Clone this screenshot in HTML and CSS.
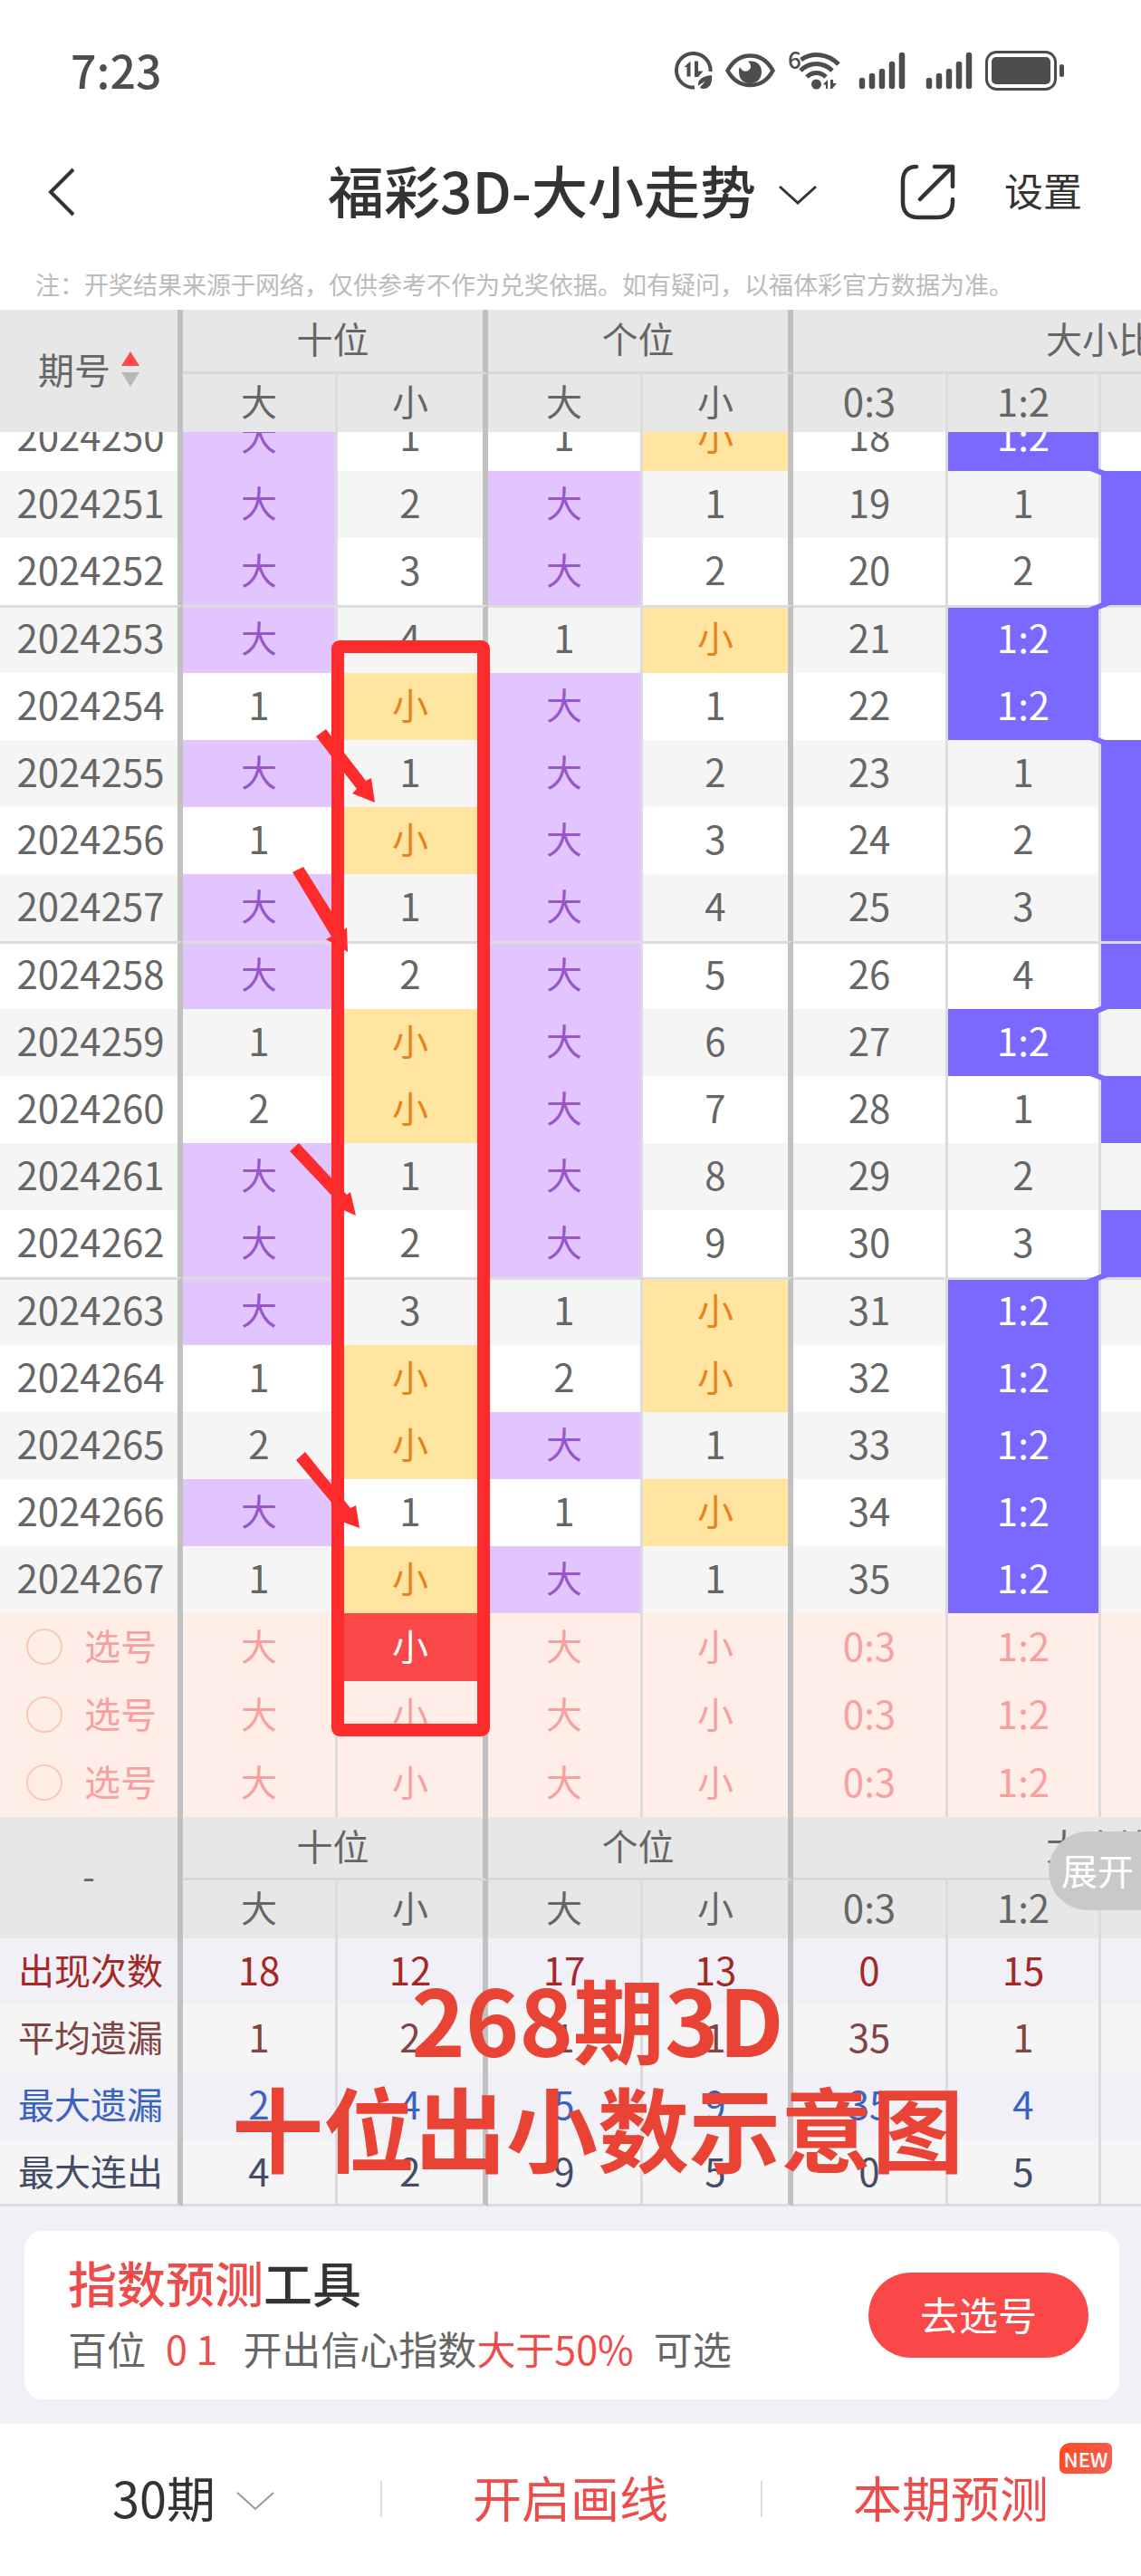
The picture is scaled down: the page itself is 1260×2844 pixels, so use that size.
FILE: index.html
```html
<!DOCTYPE html>
<html lang="zh-CN">
<head>
<meta charset="utf-8">
<meta name="viewport" content="width=device-width">
<title>福彩3D-大小走势</title>
<link rel="stylesheet" href="styles.css">
</head>
<body>
<header class="status">
  <span class="clock">7:23</span>
  <div class="status-icons">
    <svg width="42" height="42" viewBox="0 0 42 42"><path d="M22 39.500A18.800 18.800 0 1 1 39.500 22" fill="none" stroke="#4d4d4d" stroke-width="4"/><path d="M10.500 17l7-6.500v17h-4V17zM22 10.500h4v11h5.500L26 28h-4z" fill="#4d4d4d"/><path d="M41 26c1 8-2 15-9 15-2 0-3-.5-4-1.500l6-7-8 5c-1-6 5-11 15-11.500z" fill="#4d4d4d"/></svg>
    <svg width="55" height="42" viewBox="0 0 55 42"><path d="M2.500 21C9 9 18 4.500 27.500 4.500S46 9 52.500 21C46 33 37 37 27.500 37S9 33 2.500 21z" fill="none" stroke="#4d4d4d" stroke-width="4.500"/><path d="M25 11c8-2 15 3 15 11 0 7-4 13-12.500 13S15 30 15 22c0-2 0-3 1-5 2 4 6 6 9 4 4-2 4-7 0-10z" fill="#4d4d4d"/></svg>
    <svg width="58" height="44" viewBox="0 0 58 44"><text x="0" y="20" class="wifi-gen">6</text><g fill="none" stroke="#4d4d4d" stroke-width="5"><path d="M14.500 10C27 1.500 44 3 56 15"/><path d="M14 22c10-10 25-10 35 0"/><path d="M21 29c6-6 15-6 21 0"/></g><circle cx="31.500" cy="37" r="5.500" fill="#4d4d4d"/><path d="M39 37l5-5v10h-2v-4zM47 32h3v4h4l-5 6h-2z" fill="#4d4d4d"/></svg>
    <svg class="sim-one" width="52" height="42" viewBox="0 0 52 42"><path d="M4 32v6M15 27v11M26 22v16M37 14v24M48 4v34" stroke="#4d4d4d" stroke-width="6.500" stroke-linecap="round"/></svg>
    <svg width="52" height="42" viewBox="0 0 52 42"><path d="M4 32v6M15 27v11M26 22v16M37 14v24M48 4v34" stroke="#4d4d4d" stroke-width="6.500" stroke-linecap="round"/></svg>
    <svg width="88" height="44" viewBox="0 0 88 44"><rect x="1.500" y="1.500" width="76" height="41" rx="11" fill="none" stroke="#4d4d4d" stroke-width="3"/><rect x="7" y="7" width="65" height="30" rx="5" fill="#4d4d4d"/><rect x="82" y="15" width="5" height="14" rx="2.500" fill="#4d4d4d"/></svg>
  </div>
</header>

<nav class="nav">
  <button class="icon-btn back" aria-label="返回"><svg width="32" height="56" viewBox="0 0 32 56"><path d="M29 3L4 28l25 25" fill="none" stroke="#333" stroke-width="4"/></svg></button>
  <h1><button class="title">福彩3D-大小走势<svg width="44" height="24" viewBox="0 0 44 24"><path d="M2 3l20 18L42 3" fill="none" stroke="#333" stroke-width="3"/></svg></button></h1>
  <div class="nav-actions">
    <button class="icon-btn" aria-label="分享"><svg width="62" height="62" viewBox="0 0 62 62"><path d="M18 3C8 3 3 9 3 19v23c0 11 6 17 17 17h21c11 0 17-6 17-17v-3M38 3h20v22M57 4L22 39" fill="none" stroke="#333" stroke-width="4.500" stroke-linecap="round" stroke-linejoin="round"/></svg></button>
    <button class="settings">设置</button>
  </div>
</nav>
<p class="note">注：开奖结果来源于网络，仅供参考不作为兑奖依据。如有疑问，以福体彩官方数据为准。</p>

<main class="trend">
  <div class="scroll">
    <table>
      <colgroup><col class="w-issue"><col class="w-big"><col class="w-small"><col class="w-big"><col class="w-small"><col class="w-big"><col class="w-ratio"><col class="w-ratio"><col class="w-ratio"></colgroup>
      <thead>
        <tr class="head-group"><th rowspan="2" class="edge"><button class="sort">期号<svg width="20" height="42" viewBox="0 0 20 42"><path d="M10 2l10 16H0z" fill="#fa4a4a"/><path d="M10 41L0 25h20z" fill="#b8b8b8"/></svg></button></th><th colspan="2" class="edge">十位</th><th colspan="2" class="edge">个位</th><th colspan="4">大小比</th></tr>
        <tr class="head-sub"><th>大</th><th class="edge">小</th><th>大</th><th class="edge">小</th><th>0:3</th><th>1:2</th><th></th></tr>
      </thead>
      <tbody class="draws">
        <tr class="cut"><th><div>2024250</div></th><td class="b"><div>大</div></td><td><div>1</div></td><td><div>1</div></td><td class="s"><div>小</div></td><td><div>18</div></td><td class="r"><div>1:2</div></td><td></td></tr>
        <tr><th>2024251</th><td class="b">大</td><td>2</td><td class="b">大</td><td>1</td><td>19</td><td>1</td><td class="r"></td></tr>
        <tr><th>2024252</th><td class="b">大</td><td>3</td><td class="b">大</td><td>2</td><td>20</td><td>2</td><td class="r"></td></tr>
        <tr class="rule"><th>2024253</th><td class="b">大</td><td>4</td><td>1</td><td class="s">小</td><td>21</td><td class="r">1:2</td><td></td></tr>
        <tr><th>2024254</th><td>1</td><td class="s">小</td><td class="b">大</td><td>1</td><td>22</td><td class="r">1:2</td><td></td></tr>
        <tr><th>2024255</th><td class="b">大</td><td>1</td><td class="b">大</td><td>2</td><td>23</td><td>1</td><td class="r"></td></tr>
        <tr><th>2024256</th><td>1</td><td class="s">小</td><td class="b">大</td><td>3</td><td>24</td><td>2</td><td class="r"></td></tr>
        <tr><th>2024257</th><td class="b">大</td><td>1</td><td class="b">大</td><td>4</td><td>25</td><td>3</td><td class="r"></td></tr>
        <tr class="rule"><th>2024258</th><td class="b">大</td><td>2</td><td class="b">大</td><td>5</td><td>26</td><td>4</td><td class="r"></td></tr>
        <tr><th>2024259</th><td>1</td><td class="s">小</td><td class="b">大</td><td>6</td><td>27</td><td class="r">1:2</td><td></td></tr>
        <tr><th>2024260</th><td>2</td><td class="s">小</td><td class="b">大</td><td>7</td><td>28</td><td>1</td><td class="r"></td></tr>
        <tr><th>2024261</th><td class="b">大</td><td>1</td><td class="b">大</td><td>8</td><td>29</td><td>2</td><td></td></tr>
        <tr><th>2024262</th><td class="b">大</td><td>2</td><td class="b">大</td><td>9</td><td>30</td><td>3</td><td class="r"></td></tr>
        <tr class="rule"><th>2024263</th><td class="b">大</td><td>3</td><td>1</td><td class="s">小</td><td>31</td><td class="r">1:2</td><td></td></tr>
        <tr><th>2024264</th><td>1</td><td class="s">小</td><td>2</td><td class="s">小</td><td>32</td><td class="r">1:2</td><td></td></tr>
        <tr><th>2024265</th><td>2</td><td class="s">小</td><td class="b">大</td><td>1</td><td>33</td><td class="r">1:2</td><td></td></tr>
        <tr><th>2024266</th><td class="b">大</td><td>1</td><td>1</td><td class="s">小</td><td>34</td><td class="r">1:2</td><td></td></tr>
        <tr><th>2024267</th><td>1</td><td class="s">小</td><td class="b">大</td><td>1</td><td>35</td><td class="r">1:2</td><td></td></tr>
      </tbody>
      <tbody class="picks">
        <tr><th><label><input type="radio" name="pick">选号</label></th><td>大</td><td class="on">小</td><td>大</td><td>小</td><td>0:3</td><td>1:2</td><td></td></tr>
        <tr><th><label><input type="radio" name="pick">选号</label></th><td>大</td><td>小</td><td>大</td><td>小</td><td>0:3</td><td>1:2</td><td></td></tr>
        <tr><th><label><input type="radio" name="pick">选号</label></th><td>大</td><td>小</td><td>大</td><td>小</td><td>0:3</td><td>1:2</td><td></td></tr>
      </tbody>
      <tbody class="foot-head">
        <tr class="head-group"><th rowspan="2" class="edge">-</th><th colspan="2" class="edge">十位</th><th colspan="2" class="edge">个位</th><th colspan="4">大小比</th></tr>
        <tr class="head-sub"><th>大</th><th class="edge">小</th><th>大</th><th class="edge">小</th><th>0:3</th><th>1:2</th><th></th></tr>
      </tbody>
      <tbody class="stats">
        <tr class="count"><th>出现次数</th><td>18</td><td>12</td><td>17</td><td>13</td><td>0</td><td>15</td><td></td></tr>
        <tr class="avg"><th>平均遗漏</th><td>1</td><td>2</td><td>1</td><td>1</td><td>35</td><td>1</td><td></td></tr>
        <tr class="gap"><th>最大遗漏</th><td>2</td><td>4</td><td>5</td><td>9</td><td>35</td><td>4</td><td></td></tr>
        <tr class="streak"><th>最大连出</th><td>4</td><td>2</td><td>9</td><td>5</td><td>0</td><td>5</td><td></td></tr>
      </tbody>
    </table>
    <svg class="layer" width="1260" height="2095" viewBox="0 342 1260 2095"><path d="M1204 517l24 9M1204 814l24 9M1204 1185l24 9M1200 675l28 -11M1204 1119l24 -10M1200 1416l28 -11" stroke="#7b68ff" stroke-width="6" fill="none"/></svg>
  </div>
  <svg class="layer" width="1260" height="2095" viewBox="0 342 1260 2095">
    <rect x="373" y="714" width="161" height="1196" rx="2" fill="none" stroke="#fe2b2c" stroke-width="14" stroke-linejoin="round"/>
    <g fill="#fe2b2c">
      <path d="M349 813l11-8 44 57 6-3 4 27-25-10 5-5z"/>
      <path d="M323 963l12-6 44 70 4-3 1 27-24-14 6-3z"/>
      <path d="M320 1271l10-9 53 57 4-3 6 26-25-11 6-3z"/>
      <path d="M327 1612l10-9 50 62 6-3 4 25-25-9 6-5z"/>
    </g>
  </svg>
  <p class="caption">268期3D<br>十位出小数示意图</p>
  <button class="expand">展开</button>
</main>

<section class="promo">
  <div class="card">
    <div>
      <h2><em>指数预测</em>工具</h2>
      <p>百位<em class="nums">0 1</em>开出信心指数<em>大于50%</em><span class="tail">可选</span></p>
    </div>
    <button class="go">去选号</button>
  </div>
</section>

<footer class="bar">
  <button class="period">30期<svg width="44" height="24" viewBox="0 0 44 24"><path d="M2 3l20 18L42 3" fill="none" stroke="#999" stroke-width="2"/></svg></button>
  <button>开启画线</button>
  <button><span class="forecast">本期预测<span class="new">NEW</span></span></button>
</footer>
</body>
</html>
```
FILE: styles.css
```css
* { box-sizing: border-box; }
body {
  margin: 0;
  background: #fff;
  color: #333;
  font-family: "Noto Sans CJK SC", "Noto Sans", sans-serif;
  overflow-x: hidden;
}
h1, h2, p { margin: 0; font-weight: 400; }
em { font-style: normal; color: #ee4b4b; }
button { margin: 0; padding: 0; border: 0; background: none; color: inherit; font: inherit; cursor: pointer; }
svg { display: block; flex: none; }

/* phone status bar */
.status { display: flex; align-items: center; justify-content: space-between; height: 156px; padding: 0 84px 0 78px; color: #4d4d4d; }
.clock { padding-bottom: 4px; font-size: 50px; line-height: 60px; font-weight: 500; }
.status-icons { display: flex; align-items: center; gap: 14px; }
.sim-one { margin: 0 8px 0 6px; }
.wifi-gen { font-size: 26px; font-weight: 500; fill: #4d4d4d; }

/* page title row */
.nav { display: grid; grid-template-columns: 1fr auto 1fr; align-items: center; height: 112px; padding: 0 65px 0 52px; }
.icon-btn { justify-self: start; }
.title { display: flex; align-items: center; gap: 24px; margin-left: 18px; padding-bottom: 6px; font-size: 62px; line-height: 80px; font-weight: 500; }
.title svg { margin-top: 12px; }
.nav-actions { display: flex; align-items: center; justify-content: flex-end; gap: 53px; }
.settings { padding-bottom: 6px; font-size: 43px; line-height: 60px; }
.note { height: 74px; padding: 26px 39px 0; font-size: 27px; line-height: 40px; color: #bbb; white-space: nowrap; }

/* trend table */
.trend { position: relative; overflow: hidden; }
.scroll { position: relative; overflow-x: auto; scrollbar-width: none; }
table { width: 1551px; table-layout: fixed; border-collapse: separate; border-spacing: 0; font-size: 42px; line-height: 56px; color: #666; }
.w-issue { width: 202px; }
.w-big { width: 171px; }
.w-small { width: 166px; }
.w-ratio { width: 169px; }
th, td { height: 74px; padding: 0 0 6px; font-weight: 400; text-align: center; vertical-align: middle; white-space: nowrap; border-right: 3px solid #dcdcdc; }
tbody th, td:nth-child(3), td:nth-child(5), .head-group .edge, .head-sub .edge { border-right: 6px solid #c1c1c1; }
.head-group th, .head-sub th { background: #e7e7e7; font-size: 40px; }
.head-group th { height: 71px; border-bottom: 3px solid #d9d9d9; }
.head-group th:last-child { border-right: 0; }
.head-group th:first-child { border-bottom: 0; }
.head-sub th { height: 64px; border-right: 3px solid #dcdcdc; }
.head-sub th:nth-child(n+5) { font-size: 42px; }
.foot-head .head-group th { height: 70px; }
.sort { display: flex; align-items: center; gap: 12px; margin: 0 auto; }

.draws tr:nth-child(even) { background: #f5f5f5; }
.draws th, .stats th { padding-left: 4px; }
.draws .rule > * { height: 75px; padding-bottom: 9px; border-top: 3px solid #dcdcdc; }
.draws .cut > * { height: 43px; padding-bottom: 0; }
.cut div { display: flex; align-items: flex-end; justify-content: center; height: 43px; padding-bottom: 3px; line-height: 74px; overflow: hidden; }
.b, .s, .r { font-size: 40px; }
.b { background: #e2c5ff; color: #9857c9; }
.s { background: #ffe5a0; color: #e8831c; }
.r { background: #7b68ff; color: #fff; font-size: 42px; }

.picks { background: #ffeee8; color: #f8a0a0; }
.picks > tr > * { height: 75px; }
.picks td:nth-child(-n+5), .picks th { font-size: 40px; }
.picks .on { background: #fa4848; color: #fff; }
.picks label { display: flex; align-items: center; gap: 24px; padding-left: 29px; }
.picks input { appearance: none; width: 40px; height: 40px; margin: 4px 0 0; border: 2px solid #f9c8b6; border-radius: 50%; }

.stats th { font-size: 40px; }
.count, .gap { background: #f1f0f6; }
.avg, .streak { background: #f5f5f5; }
.count { color: #a52828; }
.avg { color: #804444; }
.gap { color: #3a62c4; }
.streak { color: #444c68; }
.stats .streak > * { padding-bottom: 3px; border-bottom: 3px solid #dcdcdc; }

/* marks drawn over the chart */
.layer { position: absolute; top: 0; left: 0; pointer-events: none; }
.caption { position: absolute; top: 1825px; left: 256px; width: 808px; font-size: 101px; line-height: 120px; font-weight: 700; color: #e94335; text-align: center; white-space: nowrap; pointer-events: none; }
.expand { position: absolute; right: 0; top: 1680px; width: 102px; height: 87px; padding: 0 8px 4px 0; border-radius: 44px 0 0 44px; background: #c9c9c9; color: #fff; font-size: 40px; line-height: 60px; text-align: right; }

/* index forecast card */
.promo { padding: 27px 24px 27px 27px; background: #f1f0f6; }
.card { display: flex; align-items: center; justify-content: space-between; height: 186px; padding: 0 34px 0 48px; border-radius: 20px; background: #fff; }
.card h2 { font-size: 54px; line-height: 72px; font-weight: 500; }
.card p { font-size: 43px; line-height: 72px; color: #666; white-space: nowrap; }
.card .nums { margin: 0 28px 0 22px; }
.card .tail { margin-left: 22px; }
.go { width: 243px; height: 94px; padding-bottom: 4px; border-radius: 47px; background: #fa4848; color: #fff; font-size: 43px; line-height: 60px; }

/* bottom actions */
.bar { display: grid; grid-template-columns: repeat(3, 1fr); align-items: center; height: 167px; padding-bottom: 6px; font-size: 54px; line-height: 72px; color: #ee4b4b; }
.bar button { position: relative; }
.bar button + button::before { content: ""; position: absolute; left: 0; top: 18px; width: 2px; height: 40px; background: #ddd; }
.bar .period { display: flex; align-items: center; justify-content: center; gap: 22px; padding-left: 8px; color: #333; }
.period svg { margin-top: 8px; }
.forecast { position: relative; }
.new { position: absolute; left: 228px; top: -20px; width: 58px; height: 34px; border-radius: 12px 6px 12px 6px; background: linear-gradient(120deg, #ff4a18, #f0625c); color: #fff; font-size: 22px; line-height: 34px; font-weight: 500; text-align: center; }
```
